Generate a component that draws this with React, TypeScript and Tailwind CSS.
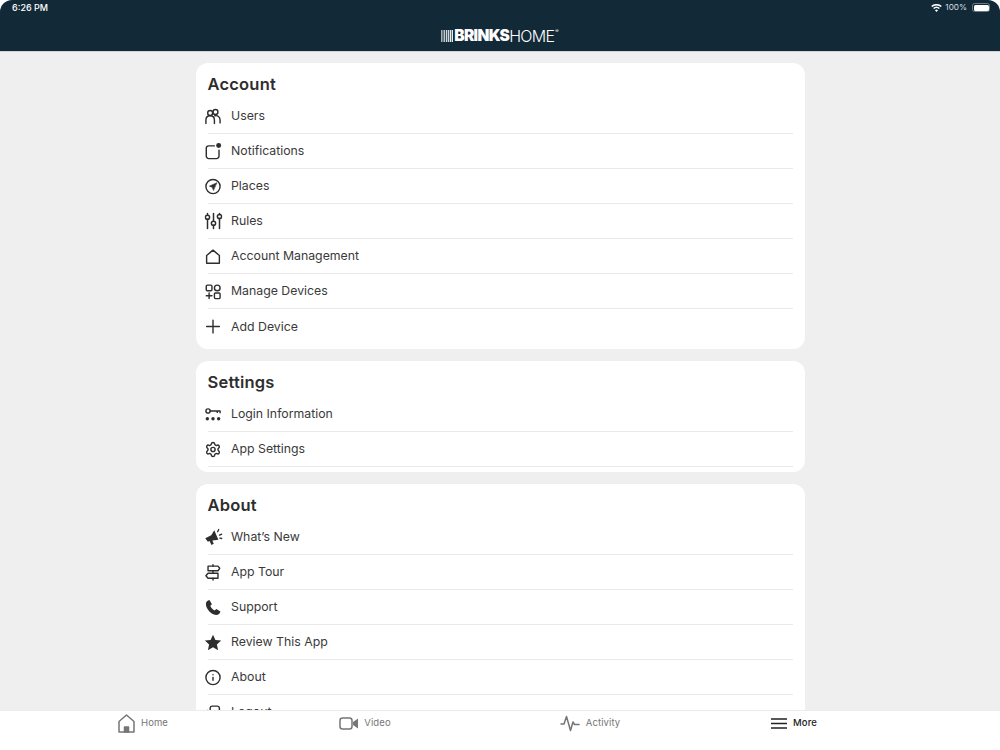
import React from "react";
import { Settings as Gear, Info } from "lucide-react";

const S = ({ children, size = 17, sw = 2 }: { children: React.ReactNode; size?: number; sw?: number }) => (
  <svg width={size} height={size} viewBox="0 0 24 24" fill="none" stroke="currentColor" strokeWidth={sw} strokeLinecap="round" strokeLinejoin="round">
    {children}
  </svg>
);

const icons: Record<string, React.ReactNode> = {
  users: (
    <S>
      <circle cx="8" cy="7" r="3.500" />
      <circle cx="15.500" cy="5.500" r="3.500" />
      <path d="M2 22v-5c0-3.500 2.500-6 6-6s6 2.500 6 6v5" />
      <path d="M14.500 11c4-1 7.500 1.500 7.500 6v4" />
    </S>
  ),
  bell: (
    <S>
      <path d="M14 4H6a3.500 3.500 0 0 0-3.500 3.500v11A3.500 3.500 0 0 0 6 22h11a3.500 3.500 0 0 0 3.500-3.500V10" />
      <circle cx="20" cy="3.500" r="3.500" fill="currentColor" stroke="none" />
    </S>
  ),
  places: (
    <S>
      <circle cx="12" cy="12" r="10" />
      <path d="M17 7l-10 4.500 4 1.500 1.500 4z" fill="currentColor" strokeWidth="1" />
    </S>
  ),
  rules: (
    <S size={18}>
      <circle cx="4" cy="7" r="2.800" />
      <path d="M4 2v2.200M4 9.800V22" />
      <circle cx="12" cy="15" r="2.800" />
      <path d="M12 2v10.200M12 17.800V22" />
      <circle cx="20" cy="6" r="2.800" />
      <path d="M20 2v1.200M20 8.800V22" />
    </S>
  ),
  house: (
    <S>
      <path d="M3 21.500V10.500L12 3l9 7.500v11z" />
    </S>
  ),
  devices: (
    <S>
      <rect x="2.500" y="3" width="8" height="8" rx="1.500" />
      <circle cx="18" cy="7" r="4" />
      <rect x="14" y="14" width="8" height="8" rx="1.500" />
      <path d="M6.500 14v8M2.500 18h8" />
    </S>
  ),
  plus: (
    <S>
      <path d="M12 3v18M3 12h18" />
    </S>
  ),
  login: (
    <S>
      <circle cx="5" cy="7" r="3" />
      <path d="M8 7h14M22 7v2.500M18 7v2" />
      <circle cx="4" cy="18" r="2.400" fill="currentColor" stroke="none" />
      <circle cx="12" cy="18" r="2.400" fill="currentColor" stroke="none" />
      <circle cx="20" cy="18" r="2.400" fill="currentColor" stroke="none" />
    </S>
  ),
  gear: <Gear size={17} strokeWidth={2} />,
  megaphone: (
    <svg width="18" height="18" viewBox="0 0 24 24" fill="currentColor">
      <path d="M13 3l5.500 12.500-8 1 1.800 4.500-3 1.500-2.500-5.300-2.300 1L1 13.500 9 9.500z" />
      <path d="M17.500 5l1.500-3M20 9.500l3-1.300M20.500 13.500l2.800.5" stroke="currentColor" strokeWidth="1.800" strokeLinecap="round" />
    </svg>
  ),
  tour: (
    <S>
      <path d="M5 3h14l2.500 3L19 9.500H5z" />
      <path d="M19 13H5l-3 3.500L5 20h14z" />
      <path d="M12 9.500V13M12 20v2.500M12 1v2" />
    </S>
  ),
  phone: (
    <svg width="17" height="17" viewBox="0 0 24 24" fill="currentColor">
      <path d="M7 1.500l3.500 5.800-2.300 2.200c.8 2.600 3.600 5.800 6.200 6.800l2.300-2.200 5.800 3.700c-.6 2.700-2.700 4.700-5 4.700C9.500 22.500 1.500 13.500 2 6.300 2.200 4 4.300 2 7 1.500z" />
    </svg>
  ),
  star: (
    <svg width="17" height="17" viewBox="0 0 24 24" fill="currentColor">
      <path d="M12 1l3.400 7.400 8.100.9-6 5.500 1.700 8L12 18.800 4.800 22.800l1.700-8-6-5.500 8.100-.9z" />
    </svg>
  ),
  info: <Info size={17} strokeWidth={2} />,
  logout: (
    <S>
      <path d="M8 9V5.500A3 3 0 0 1 11 3h7a3 3 0 0 1 3 2.500v13a3 3 0 0 1-3 2.500h-7" />
      <path d="M2 12h10M4 9l-2 3 2 3" />
    </S>
  ),
};

const Row = ({ icon, label, border = true }: { icon: string; label: string; border?: boolean }) => (
  <div className={`flex h-[35px] shrink-0 items-center ${border ? "border-b border-[#e9e9e9]" : ""}`}>
    <span className="flex w-[23.500px] -translate-x-[3.500px] shrink-0 items-center justify-start text-[#2e2e2e]">{icons[icon]}</span>
    <span className="pt-[1px] text-[12.300px] leading-none text-[#3a3a3a]">{label}</span>
  </div>
);

const Card = ({ title, children, clip }: { title: string; children: React.ReactNode; clip?: boolean }) => (
  <section className={`flex flex-col rounded-[12px] bg-white pl-[11.500px] pr-[12px] ${clip ? "" : "pb-[5px]"}`}>
    <h2 className="flex h-[36px] shrink-0 items-end pb-[6.500px] text-[16.500px] font-semibold leading-none tracking-[0.2px] text-[#2e2e2e]">{title}</h2>
    {children}
  </section>
);

const Tab = ({ w, label, active, children }: { w: string; label: string; active?: boolean; children: React.ReactNode }) => (
  <div className={`flex h-[24px] items-center justify-center gap-[6px] ${w} ${active ? "text-[#222222]" : "text-[#767676]"}`}>
    {children}
    <span className={`text-[9.500px] leading-none tracking-[0.1px] ${active ? "font-medium" : ""}`}>{label}</span>
  </div>
);

export default function App() {
  return (
    <div className="flex h-[750px] w-[1000px] flex-col overflow-hidden bg-white" style={{ fontFamily: "Inter, 'Liberation Sans', sans-serif" }}>
      <header className="relative h-[52px] shrink-0 rounded-t-[12px] border-b border-[#cfd3d5] bg-[#122a38] text-white">
        <div className="flex h-[15px] items-center justify-between pl-[12px] pr-[10px] text-[9px] font-medium leading-none">
          <span>6:26 PM</span>
          <span className="flex items-center gap-[3px] font-normal">
            <svg width="11" height="8" viewBox="0 0 24 18" fill="white">
              <path d="M12 18l-3.500-4a5 5 0 0 1 7 0zM6.500 11.500L4.300 9a11.500 11.500 0 0 1 15.400 0l-2.200 2.500a8 8 0 0 0-11 0zM2.500 7L0 4.500a18 18 0 0 1 24 0L21.500 7a14.500 14.500 0 0 0-19 0z" />
            </svg>
            <span className="text-[8.200px] text-[#d9dee1]">100%</span>
            <span className="ml-[2px] flex h-[9px] w-[18px] items-center rounded-[2.500px] border border-[#6b7b85] p-[0.500px]">
              <span className="h-full w-full rounded-[1.500px] bg-white" />
            </span>
          </span>
        </div>
        <div className="mt-[13px] flex h-[16px] items-center justify-center">
          <svg width="12" height="12" viewBox="0 0 12 12" fill="#e8ebec" className="mr-[1px] shrink-0">
            <rect x="0" width="0.700" height="12" />
            <rect x="1.600" width="0.800" height="12" />
            <rect x="3.200" width="0.900" height="12" />
            <rect x="4.900" width="1" height="12" />
            <rect x="6.700" width="1.200" height="12" />
            <rect x="8.700" width="1.300" height="12" />
            <rect x="10.600" width="1.400" height="12" />
          </svg>
          <span className="text-[15.500px] font-black leading-none tracking-[-0.700px] text-white">BRINKS</span>
          <span className="text-[16px] font-light leading-none tracking-[-0.700px] text-white">HOME</span>
          <span className="-mt-[10px] ml-[1px] text-[5px] leading-none text-white">®</span>
        </div>
      </header>

      <main className="flex min-h-0 flex-1 flex-col gap-[12px] overflow-hidden bg-[#efefef] pl-[196px] pr-[195px] pt-[11px]">
        <Card title="Account">
          <Row icon="users" label="Users" />
          <Row icon="bell" label="Notifications" />
          <Row icon="places" label="Places" />
          <Row icon="rules" label="Rules" />
          <Row icon="house" label="Account Management" />
          <Row icon="devices" label="Manage Devices" />
          <Row icon="plus" label="Add Device" border={false} />
        </Card>
        <Card title="Settings">
          <Row icon="login" label="Login Information" />
          <Row icon="gear" label="App Settings" />
        </Card>
        <Card title="About" clip>
          <Row icon="megaphone" label="What’s New" />
          <Row icon="tour" label="App Tour" />
          <Row icon="phone" label="Support" />
          <Row icon="star" label="Review This App" />
          <Row icon="info" label="About" />
          <Row icon="logout" label="Logout" />
        </Card>
      </main>

      <nav className="flex h-[40px] shrink-0 items-start border-t border-[#ececec] bg-white pl-[32px]">
        <Tab w="w-[222px]" label="Home">
          <svg width="17" height="19" viewBox="0 0 17 19" fill="none" stroke="currentColor" strokeWidth="1.500" strokeLinejoin="round">
            <path d="M1 18V7.500L8.500 1 16 7.500V18z" />
            <path d="M6.500 18v-5h4v5z" fill="currentColor" />
          </svg>
        </Tab>
        <Tab w="w-[222px]" label="Video">
          <svg width="19" height="13" viewBox="0 0 19 13" fill="none" stroke="currentColor" strokeWidth="1.500">
            <rect x="1" y="1" width="12" height="11" rx="2.500" />
            <path d="M14 5l5-3.500v10L14 8z" fill="currentColor" stroke="none" />
          </svg>
        </Tab>
        <Tab w="w-[228px]" label="Activity">
          <svg width="20" height="17" viewBox="0 0 20 17" fill="none" stroke="currentColor" strokeWidth="1.500" strokeLinecap="round" strokeLinejoin="round">
            <path d="M1 9h3l2.500-7.500 4 14L13 7l1.500 2.500H19" />
          </svg>
        </Tab>
        <Tab w="w-[180px]" label="More" active>
          <svg width="16" height="11" viewBox="0 0 16 11" fill="none" stroke="currentColor" strokeWidth="1.500">
            <path d="M0 1h16M0 5.500h16M0 10h16" />
          </svg>
        </Tab>
      </nav>
    </div>
  );
}
